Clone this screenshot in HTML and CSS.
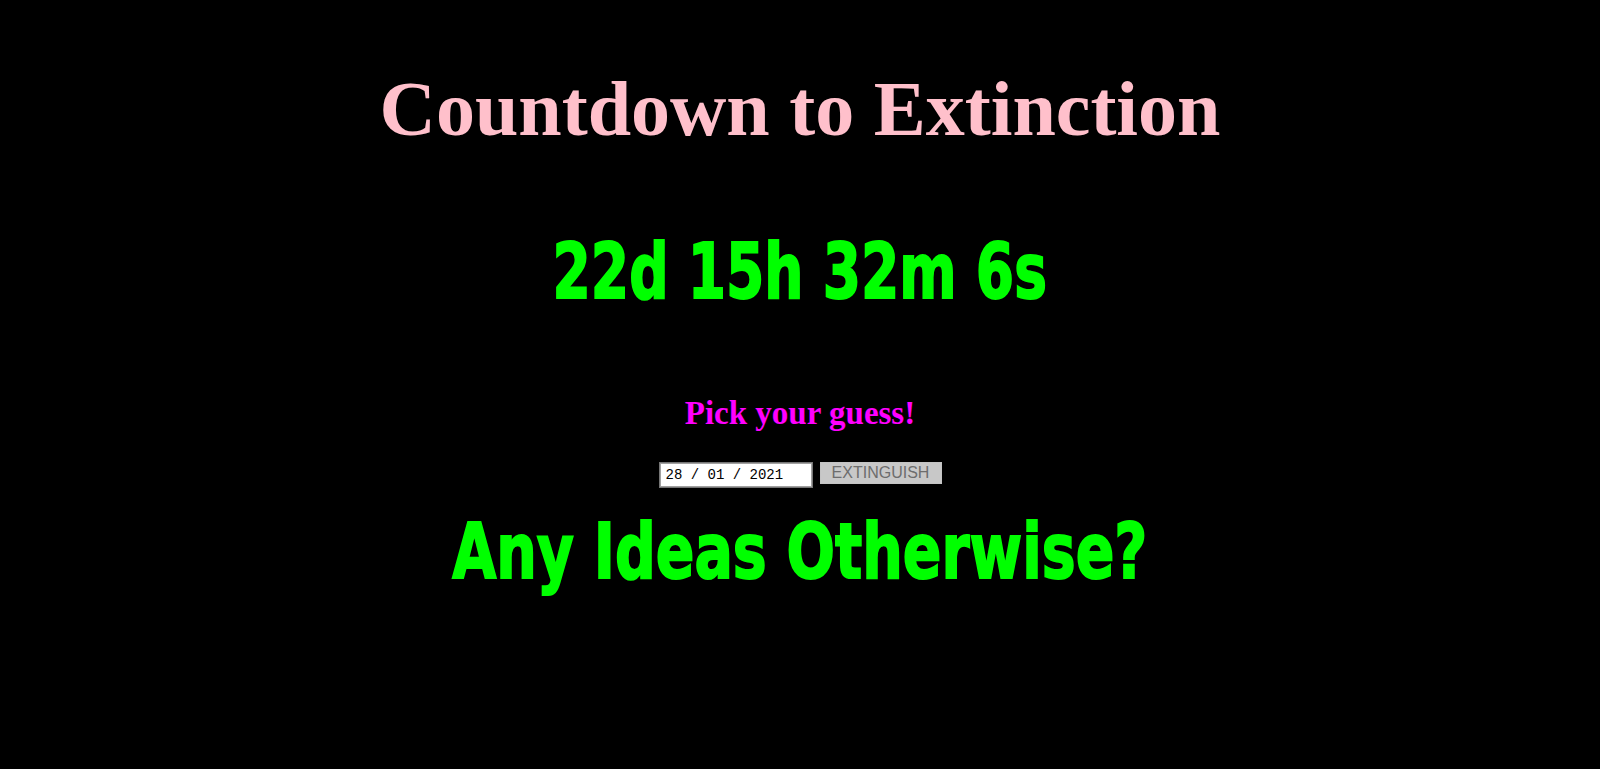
FILE: index.html
```html
<!DOCTYPE html>
<html>
<head>
<meta charset="utf-8">
<link rel="stylesheet" href="styles.css">
<title>Countdown to Extinction</title>
</head>
<body>
<main class="page">
  <h1 class="title">Countdown to Extinction</h1>
  <div class="counter"><span class="impact">22d 15h 32m 6s</span></div>
  <h2 class="pick">Pick your guess!</h2>
  <form class="guess">
    <input class="date" type="text" value="28 / 01 / 2021">
    <button class="btn" type="button">EXTINGUISH</button>
  </form>
  <div class="ideas"><span class="impact">Any Ideas Otherwise?</span></div>
</main>
</body>
</html>
```
FILE: styles.css
```css
html, body {
  margin: 0;
  padding: 0;
  background: #000;
}
.page {
  display: flex;
  flex-direction: column;
  align-items: center;
  padding-top: 69px;
  min-height: 769px;
  box-sizing: border-box;
}
.title {
  margin: 0;
  font-family: "Liberation Serif", serif;
  font-weight: bold;
  font-size: 78px;
  line-height: 80px;
  color: #ffc0cb;
}
.counter, .ideas {
  font-family: "DejaVu Sans", sans-serif;
  font-weight: bold;
  font-size: 77px;
  line-height: 76px;
  color: #00ff00;
  white-space: nowrap;
}
.impact {
  display: inline-block;
  -webkit-text-stroke: 2px #00ff00;
}
.counter {
  margin-top: 85px;
}
.counter .impact {
  transform: scaleX(0.715);
}
.pick {
  margin: 87px 0 0;
  font-family: "Liberation Serif", serif;
  font-weight: bold;
  font-size: 33px;
  line-height: 32px;
  color: #ff00ff;
}
.guess {
  margin: 33px 0 0;
  display: flex;
  align-items: flex-start;
  gap: 7px;
}
.date {
  box-sizing: border-box;
  width: 154px;
  height: 26px;
  margin: 0;
  padding: 0 6px;
  border: 1px solid #767676;
  outline: 1px solid #a0a0a0;
  outline-offset: -2px;
  background: #fff;
  font-family: "Liberation Mono", monospace;
  font-size: 14px;
  color: #000;
}
.btn {
  box-sizing: border-box;
  width: 122px;
  height: 22px;
  margin: 0;
  padding: 0;
  border: 1px solid #c4c4c4;
  background: #c8c8c8;
  font-family: "Liberation Sans", Arial, sans-serif;
  font-size: 16px;
  color: #6d6d6d;
}
.ideas {
  margin-top: 26px;
}
.ideas .impact {
  transform: scaleX(0.74);
}
```
